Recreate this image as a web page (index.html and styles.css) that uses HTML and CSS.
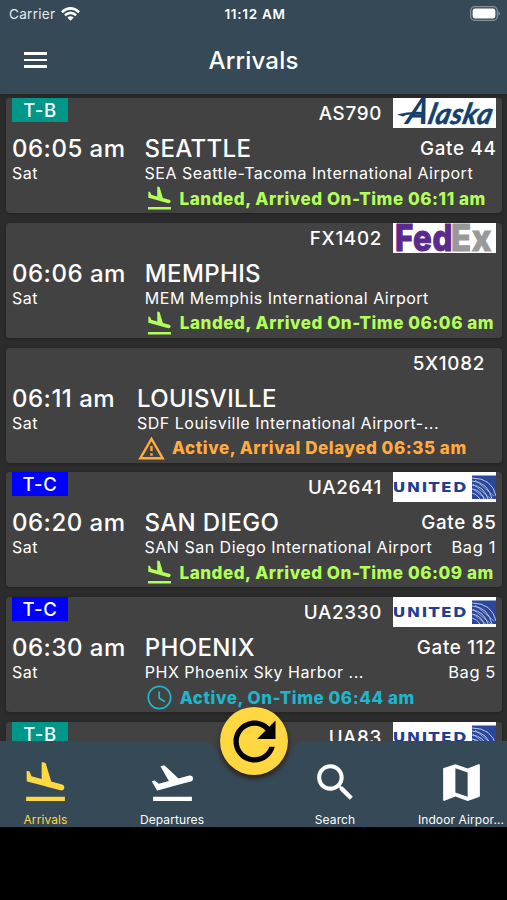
FILE: index.html
```
<!DOCTYPE html>
<html lang="en">
<head>
  <meta charset="UTF-8" />
  <meta name="viewport" content="width=device-width, initial-scale=1" />
  <title>Arrivals</title>
  <link rel="stylesheet" href="styles.css">
</head>
<body>
  <!-- Shared icons and airline logos -->
  <svg class="defs" width="0" height="0">
    <symbol id="land" viewBox="0 0 24 24">
      <path d="M2.5 19h19v2h-19zm7.18-5.73l4.35 1.16 5.31 1.42c.8.21 1.62-.26 1.84-1.06.21-.8-.26-1.62-1.06-1.84l-5.31-1.42-2.76-9.02L10.12 2v8.28L5.15 8.95l-.93-2.32-1.45-.39v5.17l1.6.43 5.31 1.43z"/>
    </symbol>
    <symbol id="takeoff" viewBox="0 0 24 24">
      <path d="M2.5 19h19v2h-19zm19.57-9.36c-.21-.8-1.04-1.28-1.84-1.06L14.92 10l-6.9-6.43-1.93.51 4.14 7.17-4.97 1.33-1.97-1.54-1.45.39 1.82 3.16.77 1.33 1.6-.43 5.31-1.42 4.35-1.16L21 11.49c.81-.23 1.28-1.05 1.07-1.85z"/>
    </symbol>
    <symbol id="united" viewBox="0 0 103 30">
      <rect width="103" height="30" fill="#fff"/>
      <text x="-.5" y="20.3" textLength="75" lengthAdjust="spacingAndGlyphs" letter-spacing="1" font-family="DejaVu Sans" font-weight="700" font-size="13.8" fill="#1f3f93">UNITED</text>
      <rect x="79" y="3.5" width="24" height="23.5" fill="#2b479b"/>
      <g fill="none" stroke="#b9c6e6" stroke-width="1">
        <path d="M79 9q16 1 20 18M79 13q12 1 16 14M79 17q9 1 12 10M79 21q5 1 8 6M79 6q20 0 24 18"/>
        <path d="M80 12L98 27M80 17L93 27M82 8L101 24" stroke-width=".7"/>
      </g>
    </symbol>
  </svg>

  <div class="phone">
    <header class="header">
      <div class="status-bar">
        <div class="carrier">
          <span>Carrier</span>
          <svg width="19" height="14" viewBox="0 0 19 14" fill="none" stroke="#fff" stroke-width="2.5">
            <path d="M.9 5.2Q9.5-2.4 18.1 5.2M3.9 8.3Q9.5 3.5 15.1 8.3"/>
            <path d="M9.5 13.7L6.3 10.5Q9.5 7.9 12.7 10.5z" fill="#fff" stroke="none"/>
          </svg>
        </div>
        <span class="clock">11:12 AM</span>
        <svg class="battery" width="31" height="15" viewBox="0 0 31 15">
          <rect x=".7" y=".7" width="26.6" height="13.6" rx="4" fill="none" stroke="#84919a" stroke-width="1.3"/>
          <rect x="2.6" y="2.6" width="22.8" height="9.8" rx="2.3" fill="#fff"/>
          <path d="M28.5 5q3 2.5 0 5z" fill="#84919a"/>
        </svg>
      </div>
      <div class="toolbar">
        <div class="menu"><i></i><i></i><i></i></div>
        <h1>Arrivals</h1>
      </div>
    </header>

    <main class="list">
      <div class="card">
        <div class="when">
          <div class="slot"><span class="terminal tb">T-B</span></div>
          <div class="time">06:05 am</div>
          <div class="day">Sat</div>
        </div>
        <div class="info">
          <div class="flight">
            <span>AS790</span>
            <svg class="logo" viewBox="0 0 103 30">
              <rect width="103" height="30" fill="#fff"/>
              <g fill="#15406e" font-family="Lato" font-style="italic" font-weight="700" transform="translate(6 0) skewX(-13)">
                <text x="12" y="26" font-size="36" textLength="22" lengthAdjust="spacingAndGlyphs">A</text>
                <text x="34" y="26" font-size="29" textLength="64" lengthAdjust="spacingAndGlyphs" stroke="#15406e" stroke-width=".6">laska</text>
              </g>
              <path d="M4 16.5Q16 13 31 14L31 16.5Q22 16 13 17L10 18.5Q7 17.5 4 16.5z" fill="#15406e"/>
            </svg>
          </div>
          <div class="row city"><span>SEATTLE</span><span class="gate">Gate 44</span></div>
          <div class="row airport"><span>SEA Seattle-Tacoma International Airport</span></div>
          <div class="status landed"><svg><use href="#land"/></svg><span>Landed, Arrived On-Time 06:11 am</span></div>
        </div>
      </div>

      <div class="card">
        <div class="when">
          <div class="slot"></div>
          <div class="time">06:06 am</div>
          <div class="day">Sat</div>
        </div>
        <div class="info">
          <div class="flight">
            <span>FX1402</span>
            <svg class="logo" viewBox="0 0 103 30">
              <rect width="103" height="30" fill="#fff"/>
              <g font-family="Inter" font-weight="800" font-size="37">
                <text x="2" y="28" textLength="58" lengthAdjust="spacingAndGlyphs" fill="#5c2a8c" stroke="#5c2a8c">Fed</text>
                <text x="58" y="28" textLength="41" lengthAdjust="spacingAndGlyphs" fill="#999" stroke="#999">Ex</text>
              </g>
            </svg>
          </div>
          <div class="row city"><span>MEMPHIS</span></div>
          <div class="row airport"><span>MEM Memphis International Airport</span></div>
          <div class="status landed"><svg><use href="#land"/></svg><span>Landed, Arrived On-Time 06:06 am</span></div>
        </div>
      </div>

      <div class="card">
        <div class="when">
          <div class="slot"></div>
          <div class="time">06:11 am</div>
          <div class="day">Sat</div>
        </div>
        <div class="info">
          <div class="flight no-logo"><span>5X1082</span></div>
          <div class="row city"><span>LOUISVILLE</span></div>
          <div class="row airport"><span>SDF Louisville International Airport-...</span></div>
          <div class="status delayed">
            <svg viewBox="0 0 24 24"><path d="M12 5.99L19.53 19H4.47L12 5.99M12 2L1 21h22L12 2zm1 14h-2v2h2v-2zm0-6h-2v4h2v-4z"/></svg>
            <span>Active, Arrival Delayed 06:35 am</span>
          </div>
        </div>
      </div>

      <div class="card">
        <div class="when">
          <div class="slot"><span class="terminal tc">T-C</span></div>
          <div class="time">06:20 am</div>
          <div class="day">Sat</div>
        </div>
        <div class="info">
          <div class="flight"><span>UA2641</span><svg class="logo"><use href="#united"/></svg></div>
          <div class="row city"><span>SAN DIEGO</span><span class="gate">Gate 85</span></div>
          <div class="row airport"><span>SAN San Diego International Airport</span><span class="bag">Bag 1</span></div>
          <div class="status landed"><svg><use href="#land"/></svg><span>Landed, Arrived On-Time 06:09 am</span></div>
        </div>
      </div>

      <div class="card">
        <div class="when">
          <div class="slot"><span class="terminal tc">T-C</span></div>
          <div class="time">06:30 am</div>
          <div class="day">Sat</div>
        </div>
        <div class="info">
          <div class="flight"><span>UA2330</span><svg class="logo"><use href="#united"/></svg></div>
          <div class="row city"><span>PHOENIX</span><span class="gate">Gate 112</span></div>
          <div class="row airport"><span>PHX Phoenix Sky Harbor ...</span><span class="bag">Bag 5</span></div>
          <div class="status active">
            <svg viewBox="0 0 24 24"><path d="M11.99 2C6.47 2 2 6.48 2 12s4.47 10 9.99 10C17.52 22 22 17.52 22 12S17.52 2 11.99 2zM12 20.5c-4.7 0-8.5-3.8-8.5-8.5S7.3 3.5 12 3.5s8.5 3.8 8.5 8.5-3.8 8.5-8.5 8.5zm.5-13.5H11v6l5.25 3.15.75-1.23-4.5-2.67z"/></svg>
            <span>Active, On-Time 06:44 am</span>
          </div>
        </div>
      </div>

      <div class="card">
        <div class="when">
          <div class="slot"><span class="terminal tb">T-B</span></div>
        </div>
        <div class="info">
          <div class="flight"><span>UA83</span><svg class="logo"><use href="#united"/></svg></div>
        </div>
      </div>
    </main>

    <!-- Bottom navigation with a notch for the refresh button -->
    <nav class="nav">
      <svg class="nav-bg" viewBox="0 0 507 86">
        <path d="M0 0H199Q212 0 216.5 9A38.5 38.5 0 0 0 291.5 9Q296 0 309 0H507V86H0z" fill="#354956"/>
      </svg>
      <a class="tab selected"><svg><use href="#land"/></svg><span>Arrivals</span></a>
      <a class="tab"><svg><use href="#takeoff"/></svg><span>Departures</span></a>
      <a class="tab after-notch">
        <svg viewBox="0 0 24 24"><path d="M15.5 14h-.79l-.28-.27C15.41 12.59 16 11.11 16 9.5 16 5.91 13.09 3 9.5 3S3 5.91 3 9.5 5.91 16 9.5 16c1.61 0 3.09-.59 4.23-1.57l.27.28v.79l5 4.99L20.49 19l-4.99-5zm-6 0C7.01 14 5 11.99 5 9.5S7.01 5 9.5 5 14 7.01 14 9.5 11.99 14 9.5 14z"/></svg>
        <span>Search</span>
      </a>
      <a class="tab">
        <svg viewBox="0 0 24 24"><path d="M20.5 3l-.16.03L15 5.1 9 3 3.36 4.9c-.21.07-.36.25-.36.48V20.5c0 .28.22.5.5.5l.16-.03L9 18.9l6 2.1 5.64-1.9c.21-.07.36-.25.36-.48V3.5c0-.28-.22-.5-.5-.5zM15 19l-6-2.11V5l6 2.11V19z"/></svg>
        <span>Indoor Airpor...</span>
      </a>
      <div class="refresh">
        <svg viewBox="0 0 24 24"><path d="M17.65 6.35C16.2 4.9 14.21 4 12 4c-4.42 0-7.99 3.58-7.99 8s3.57 8 7.99 8c3.73 0 6.84-2.55 7.73-6h-2.08c-.82 2.33-3.04 4-5.65 4-3.31 0-6-2.69-6-6s2.69-6 6-6c1.66 0 3.14.69 4.22 1.78L13 11h7V4l-2.35 2.35z"/></svg>
      </div>
    </nav>
  </div>
</body>
</html>
```

FILE: styles.css
```
* {
  box-sizing: border-box;
}

body {
  margin: 0;
  background-color: #000;
  color: #fff;
  font-family: Inter, Roboto, sans-serif;
}

svg {
  display: block;
  flex: none;
}

.defs {
  position: absolute;
}

.phone {
  position: relative;
  width: 507px;
  height: 827px;
  overflow: hidden;
  background-color: #2c2c2c;
}

/* Header */
.header {
  height: 94px;
  background-color: #354956;
  box-shadow: 0 1px 3px #222;
}

.status-bar {
  display: grid;
  grid-template-columns: 1fr auto 1fr;
  align-items: center;
  height: 27px;
  padding: 0 6px 0 9px;
}

.carrier {
  display: flex;
  align-items: center;
  gap: 6px;
  font-size: 13.5px;
  letter-spacing: 0.3px;
  color: #e6eaec;
}

.clock {
  font-size: 13.5px;
  font-weight: 600;
  letter-spacing: 0.7px;
  font-kerning: none;
}

.battery {
  justify-self: end;
}

.toolbar {
  display: grid;
  grid-template-columns: 1fr auto 1fr;
  align-items: center;
  height: 66px;
  padding: 0 24px;
}

.menu {
  display: flex;
  flex-direction: column;
  gap: 3.6px;
}

.menu i {
  width: 23px;
  height: 2.7px;
  background-color: #fff;
}

h1 {
  margin: 0;
  font-size: 24px;
  font-weight: 500;
  letter-spacing: 0.2px;
}

/* Flight cards */
.list {
  display: flex;
  flex-direction: column;
  gap: 9.7px;
  padding: 4.3px 5px 0 6px;
}

.card {
  display: flex;
  flex: none;
  gap: 19px;
  height: 115px;
  padding: 0 6px;
  border-radius: 4px;
  background-color: #424242;
  box-shadow: 0 1px 3px #222;
  white-space: nowrap;
}

.when {
  min-width: 106px;
}

/* the last card shows only its top line */
.card:last-child .when {
  min-width: 113px;
}

.slot {
  height: 37px;
}

.terminal {
  display: block;
  width: 56px;
  height: 24px;
  font-size: 18.5px;
  font-weight: 500;
  letter-spacing: 0.7px;
  line-height: 24px;
  text-align: center;
}

.tb {
  background-color: #009688;
}

.tc {
  background-color: #0000ff;
}

.time {
  font-size: 24px;
  font-weight: 500;
  font-kerning: none;
  letter-spacing: 0.5px;
  line-height: 28px;
}

.day {
  font-size: 16px;
  letter-spacing: 0.5px;
  line-height: 20px;
}

.info {
  flex: 1;
}

.flight {
  display: flex;
  justify-content: flex-end;
  gap: 11px;
  height: 37px;
  font-size: 18.8px;
  font-weight: 500;
  letter-spacing: 0.7px;
  line-height: 31px;
}

.no-logo {
  padding-right: 11px;
}

.logo {
  width: 103px;
  height: 30px;
}

.row {
  display: flex;
  justify-content: space-between;
}

.city {
  font-size: 24px;
  font-weight: 500;
  letter-spacing: 0.35px;
  line-height: 28px;
}

.gate {
  margin-right: -0.5px;
  font-size: 18.8px;
  letter-spacing: 0.7px;
}

.airport {
  font-size: 16px;
  letter-spacing: 0.5px;
  line-height: 20px;
}

.bag {
  font-size: 16.5px;
  letter-spacing: 0.6px;
}

.status {
  display: flex;
  align-items: center;
  gap: 6px;
  height: 31px;
  font-size: 17px;
  font-weight: 800;
  letter-spacing: 0.55px;
  fill: currentColor;
}

.status svg {
  width: 29px;
  height: 29px;
}

.landed {
  color: #b2ff59;
}

.delayed {
  color: #ffab40;
}

.active {
  color: #1fb5cb;
}

/* Bottom navigation */
.nav {
  position: absolute;
  top: 741px;
  left: 0;
  display: flex;
  width: 507px;
  height: 86px;
  fill: #fff;
}

.nav-bg {
  position: absolute;
  width: 507px;
  height: 86px;
}

.tab {
  position: relative;
  display: flex;
  flex: none;
  flex-direction: column;
  align-items: center;
  width: 126px;
  padding-top: 17px;
  font-size: 12px;
  letter-spacing: 0.1px;
  line-height: 16px;
  white-space: nowrap;
}

.tab svg {
  width: 49px;
  height: 49px;
  margin-bottom: 5px;
}

.tab:nth-of-type(1) {
  width: 91px;
  margin-right: 18px;
}

.after-notch {
  margin-left: 37px;
}

.selected {
  color: #ffd740;
  fill: #ffd740;
}

.refresh {
  position: absolute;
  top: -34px;
  left: 220px;
  display: flex;
  align-items: center;
  justify-content: center;
  width: 68px;
  height: 68px;
  border-radius: 50%;
  background-color: #ffd740;
  box-shadow: 0 3px 5px rgba(0, 0, 0, 0.5);
  fill: #000;
}

.refresh svg {
  width: 63px;
  height: 63px;
}
```
